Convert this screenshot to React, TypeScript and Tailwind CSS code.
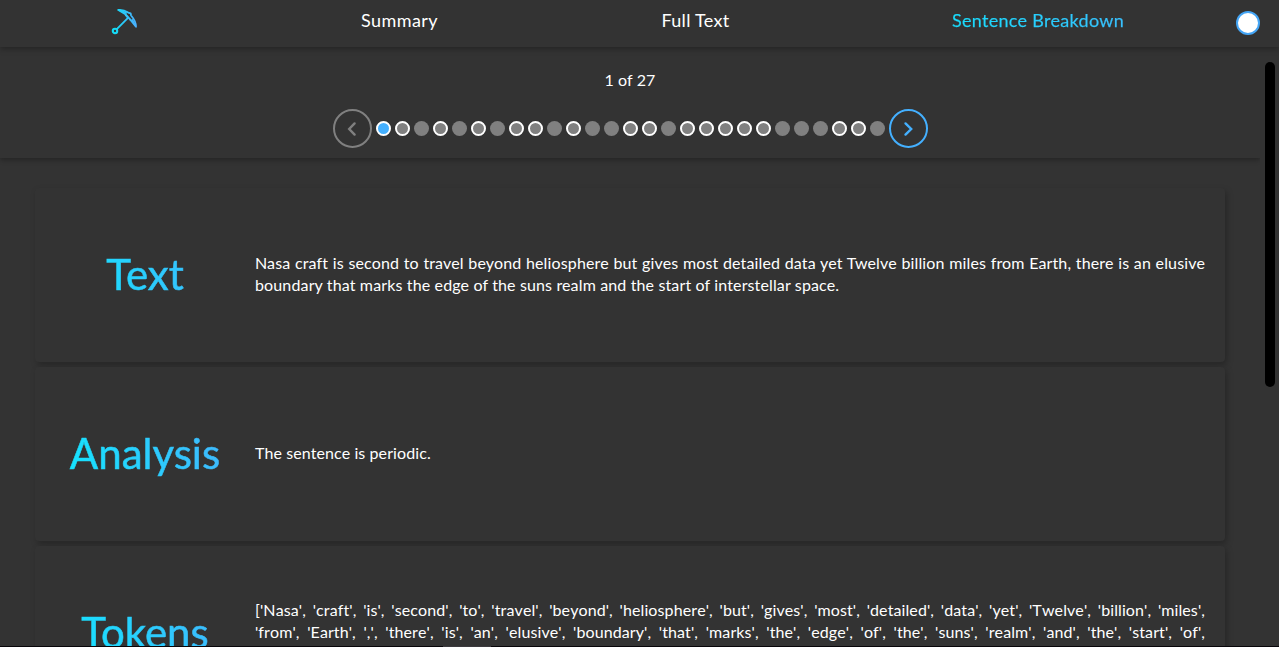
import React from "react";

// a = active, r = ringed, f = flat
const DOTS = "arfrfrfrrfrffrrfrrrrrfffrrf";

const dotClass: Record<string, string> = {
  a: "border-2 border-white bg-[#44b0ff]",
  r: "border-2 border-white bg-[#808080]",
  f: "bg-[#808080]",
};

function Pickaxe() {
  return (
    <svg width="28" height="28" viewBox="0 0 28 28" fill="none">
      <defs>
        <linearGradient id="pick" x1="0" y1="0" x2="28" y2="0" gradientUnits="userSpaceOnUse">
          <stop offset="0.1" stopColor="#0fdff5" />
          <stop offset="1" stopColor="#4facfe" />
        </linearGradient>
      </defs>
      <g stroke="url(#pick)" strokeWidth="1.8" strokeLinejoin="round" strokeLinecap="round">
        <circle cx="5" cy="23" r="2.2" strokeWidth="2.1" />
        <path d="M6.8 21.2 18 9.8 15.6 7" />
        <path d="M8.4 1.9C11.5 1.6 15 2.4 18.2 4.6L20.6 5.3 21.1 7.5C24 11 26.2 15 26 18.8L20.3 11.6" />
        <path d="M8.4 1.9 15.4 6.2 20.3 11.6" />
        <path d="M10 2.4 16 5M25.3 17.4 22.3 12" />
      </g>
    </svg>
  );
}

function Arrow({ flip = false }: { flip?: boolean }) {
  return (
    <button
      className={
        flip
          ? "flex size-[39px] shrink-0 items-center justify-center rounded-full border-2 border-[#808080] text-[#808080]"
          : "flex size-[39px] shrink-0 items-center justify-center rounded-full border-2 border-[#44b0ff] text-[#44b0ff]"
      }
    >
      <svg width="15" height="17" viewBox="0 0 15 17" fill="none" stroke="currentColor" strokeWidth="2.4" strokeLinecap="round">
        <path d={flip ? "M9.6 3.4 4.2 9l5.4 5.6" : "M4.5 3.4 10.2 9l-5.7 5.6"} />
      </svg>
    </button>
  );
}

function Card({ title, children }: { title: string; children: React.ReactNode }) {
  return (
    <section className="flex h-[174px] shrink-0 items-center rounded bg-[#333] pr-5 shadow-[2px_3px_6px_rgba(0,0,0,0.25)]">
      <h2 className="w-[220px] shrink-0 whitespace-nowrap bg-[linear-gradient(75deg,#0cecfe,#48b0fe)] bg-clip-text pb-0.5 text-center text-[42px] leading-[57px] text-transparent [-webkit-text-stroke:0.6px_transparent]">
        {title}
      </h2>
      <div className="w-[950px] pb-0.5 text-base leading-[22px] tracking-[0.14px]">{children}</div>
    </section>
  );
}

export default function App() {
  return (
    <div className="flex h-[647px] w-[1279px] flex-col overflow-hidden bg-[#333] font-['Lato',sans-serif] text-white">
      <header className="z-10 flex h-[47px] shrink-0 bg-[#333] text-lg leading-[40px] shadow-[0_2px_6px_rgba(0,0,0,0.3)]">
        <div className="flex w-[248px] justify-center pt-2">
          <Pickaxe />
        </div>
        <nav className="flex">
          <a className="w-[303px] text-center tracking-[0.45px]">Summary</a>
          <a className="w-[289px] text-center tracking-[0.3px]">Full Text</a>
          <a className="w-[396px] bg-[linear-gradient(75deg,#00f2fe,#4facfe)] bg-clip-text text-center tracking-[0.3px] text-transparent [-webkit-text-stroke:0.25px_transparent]">
            Sentence Breakdown
          </a>
        </nav>
        <div className="pt-[11px]">
          <div className="size-6 rounded-full border-2 border-[#44a5f5] bg-white" />
        </div>
      </header>
      <div className="flex min-h-0 flex-1">
        <main className="flex w-[1260px] flex-col overflow-hidden">
          <div className="flex h-[111px] shrink-0 flex-col items-center pt-[22px] shadow-[0_2px_5px_rgba(0,0,0,0.3)]">
            <p className="text-base leading-[22px] tracking-[0.1px]">1 of 27</p>
            <div className="mt-[18px] flex items-center gap-1">
              <Arrow flip />
              {DOTS.split("").map((d, i) => (
                <span key={i} className={`size-[15px] rounded-full ${dotClass[d]}`} />
              ))}
              <Arrow />
            </div>
          </div>
          <div className="flex flex-col gap-[5px] pl-[35px] pr-[35px] pt-[30px]">
            <Card title="Text">
              <p className="whitespace-nowrap [text-align-last:justify]">
                Nasa craft is second to travel beyond heliosphere but gives most detailed data yet Twelve billion miles from Earth, there is an elusive
              </p>
              <p className="whitespace-nowrap">
                boundary that marks the edge of the suns realm and the start of interstellar space.
              </p>
            </Card>
            <Card title="Analysis">
              <p className="tracking-[0.1px]">The sentence is periodic.</p>
            </Card>
            <Card title="Tokens">
              <p className="whitespace-nowrap tracking-[0.1px] [font-kerning:none] [text-align-last:justify]">
                ['Nasa', 'craft', 'is', 'second', 'to', 'travel', 'beyond', 'heliosphere', 'but', 'gives', 'most', 'detailed', 'data', 'yet', 'Twelve', 'billion', 'miles',
              </p>
              <p className="whitespace-nowrap tracking-[0.1px] [font-kerning:none] [text-align-last:justify]">
                'from', 'Earth', ',', 'there', 'is', 'an', 'elusive', 'boundary', 'that', 'marks', 'the', 'edge', 'of', 'the', 'suns', 'realm', 'and', 'the', 'start', 'of',
              </p>
              <p>'interstellar', 'space', '.']</p>
            </Card>
          </div>
        </main>
        <div className="w-[19px] pl-[5px] pt-[15px]">
          <div className="h-[325px] w-2.5 rounded-full bg-black" />
        </div>
      </div>
      <footer className="flex h-px shrink-0 bg-[#08060a] pl-[443px]">
        <div className="w-12 bg-[#3c3a3e]" />
      </footer>
    </div>
  );
}
